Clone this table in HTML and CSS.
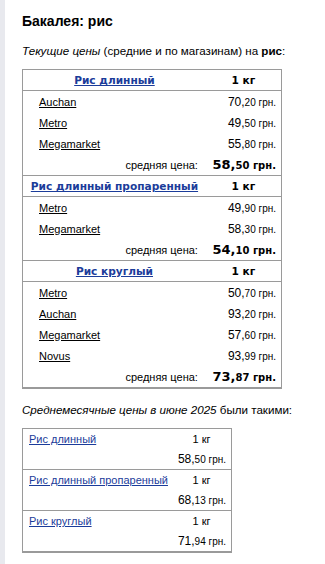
FILE: index.html
```html
<!DOCTYPE html>
<html lang="ru">
<head>
<meta charset="utf-8">
<title>Бакалея: рис</title>
<link rel="stylesheet" href="styles.css">
</head>
<body>
<div class="page">
  <h1 class="title">Бакалея: рис</h1>
  <p class="lead"><i>Текущие цены</i> (средние и по магазинам) на <b>рис</b>:</p>

  <table class="prices">
    <colgroup><col class="c-name"><col class="c-price"></colgroup>
    <tr class="head"><th class="prod"><a href="#">Рис длинный</a></th><th class="unit">1 кг</th></tr>
    <tr class="shop"><td class="store"><a href="#">Auchan</a></td><td class="price"><span class="int">70,</span>20 грн.</td></tr>
    <tr class="shop"><td class="store"><a href="#">Metro</a></td><td class="price"><span class="int">49,</span>50 грн.</td></tr>
    <tr class="shop"><td class="store"><a href="#">Megamarket</a></td><td class="price"><span class="int">55,</span>80 грн.</td></tr>
    <tr class="avg"><td class="avg-label">средняя цена:</td><td class="avg-price"><span class="int">58,</span>50 грн.</td></tr>

    <tr class="head"><th class="prod"><a href="#">Рис длинный пропаренный</a></th><th class="unit">1 кг</th></tr>
    <tr class="shop"><td class="store"><a href="#">Metro</a></td><td class="price"><span class="int">49,</span>90 грн.</td></tr>
    <tr class="shop"><td class="store"><a href="#">Megamarket</a></td><td class="price"><span class="int">58,</span>30 грн.</td></tr>
    <tr class="avg"><td class="avg-label">средняя цена:</td><td class="avg-price"><span class="int">54,</span>10 грн.</td></tr>

    <tr class="head"><th class="prod"><a href="#">Рис круглый</a></th><th class="unit">1 кг</th></tr>
    <tr class="shop"><td class="store"><a href="#">Metro</a></td><td class="price"><span class="int">50,</span>70 грн.</td></tr>
    <tr class="shop"><td class="store"><a href="#">Auchan</a></td><td class="price"><span class="int">93,</span>20 грн.</td></tr>
    <tr class="shop"><td class="store"><a href="#">Megamarket</a></td><td class="price"><span class="int">57,</span>60 грн.</td></tr>
    <tr class="shop"><td class="store"><a href="#">Novus</a></td><td class="price"><span class="int">93,</span>99 грн.</td></tr>
    <tr class="avg"><td class="avg-label">средняя цена:</td><td class="avg-price"><span class="int">73,</span>87 грн.</td></tr>
  </table>

  <p class="lead lead-month"><i>Среднемесячные цены в июне 2025</i> были такими:</p>

  <table class="monthly">
    <colgroup><col class="m-name"><col class="m-price"></colgroup>
    <tbody class="grp">
      <tr><td class="m-prod"><a href="#">Рис длинный</a></td><td class="m-unit">1 кг</td></tr>
      <tr><td></td><td class="m-val"><span class="int">58,</span>50 грн.</td></tr>
    </tbody>
    <tbody class="grp">
      <tr><td class="m-prod"><a href="#">Рис длинный пропаренный</a></td><td class="m-unit">1 кг</td></tr>
      <tr><td></td><td class="m-val"><span class="int">68,</span>13 грн.</td></tr>
    </tbody>
    <tbody class="grp">
      <tr><td class="m-prod"><a href="#">Рис круглый</a></td><td class="m-unit">1 кг</td></tr>
      <tr><td></td><td class="m-val"><span class="int">71,</span>94 грн.</td></tr>
    </tbody>
  </table>
</div>
</body>
</html>
```

FILE: styles.css
```css
html, body {
  margin: 0;
  padding: 0;
  background: #ffffff;
}

.page {
  min-height: 564px;
  border-left: 5px solid #e8e9ee;
  padding: 13px 0 0 17px;
  font-family: "Liberation Sans", Arial, sans-serif;
  font-size: 11px;
  color: #000;
  box-sizing: border-box;
}

.title {
  margin: 0;
  font-size: 14px;
  line-height: 16px;
  font-weight: bold;
}

.lead {
  margin: 15px 0 0;
  font-size: 11.6px;
  line-height: 14px;
}

.lead-month {
  margin-top: 14px;
}

a {
  color: #1b3c9a;
  text-decoration: underline;
}

/* current prices table */
.prices {
  margin-top: 11px;
  border-collapse: collapse;
  width: 260px;
  border: 1px solid #9a9a9a;
  border-bottom-width: 2px;
}

.c-name { width: 184px; }
.c-price { width: 76px; }

.prices td, .prices th {
  padding: 0;
}

.head th {
  height: 20px;
  border-top: 1px solid #9a9a9a;
  border-bottom: 1px solid #9a9a9a;
  font-family: "DejaVu Sans", Verdana, sans-serif;
  font-size: 10.6px;
  font-weight: bold;
  text-align: center;
  vertical-align: middle;
  white-space: nowrap;
}

.head .prod {
  padding: 0 3px;
}

.head .prod a {
  color: #1b3c9a;
}

.shop td, .avg td {
  height: 21px;
  vertical-align: middle;
}

.store {
  padding-left: 16px !important;
}

.store a {
  color: #000;
}

.price {
  text-align: right;
  padding-right: 5px !important;
  font-size: 10px;
  white-space: nowrap;
}

.price .int, .m-val .int {
  font-size: 12px;
}

.avg-label {
  text-align: right;
  padding-right: 8px !important;
}

.avg-price {
  text-align: right;
  padding-right: 5px !important;
  font-family: "DejaVu Sans", Verdana, sans-serif;
  font-weight: bold;
  font-size: 10px;
  white-space: nowrap;
}

.avg-price .int {
  font-size: 13px;
}

/* monthly table */
.monthly {
  margin-top: 11px;
  border-collapse: collapse;
  width: 210px;
  border: 1px solid #9a9a9a;
  border-bottom-width: 2px;
}

.m-name { width: 150px; }
.m-price { width: 60px; }

.monthly td {
  padding: 0;
  height: 20px;
  vertical-align: middle;
}

.grp + .grp {
  border-top: 1px solid #9a9a9a;
}

.m-prod {
  padding-left: 6px !important;
  white-space: nowrap;
}

.m-unit {
  text-align: center;
}

.m-val {
  text-align: right;
  padding-right: 5px !important;
  font-size: 10px;
  white-space: nowrap;
}
```
